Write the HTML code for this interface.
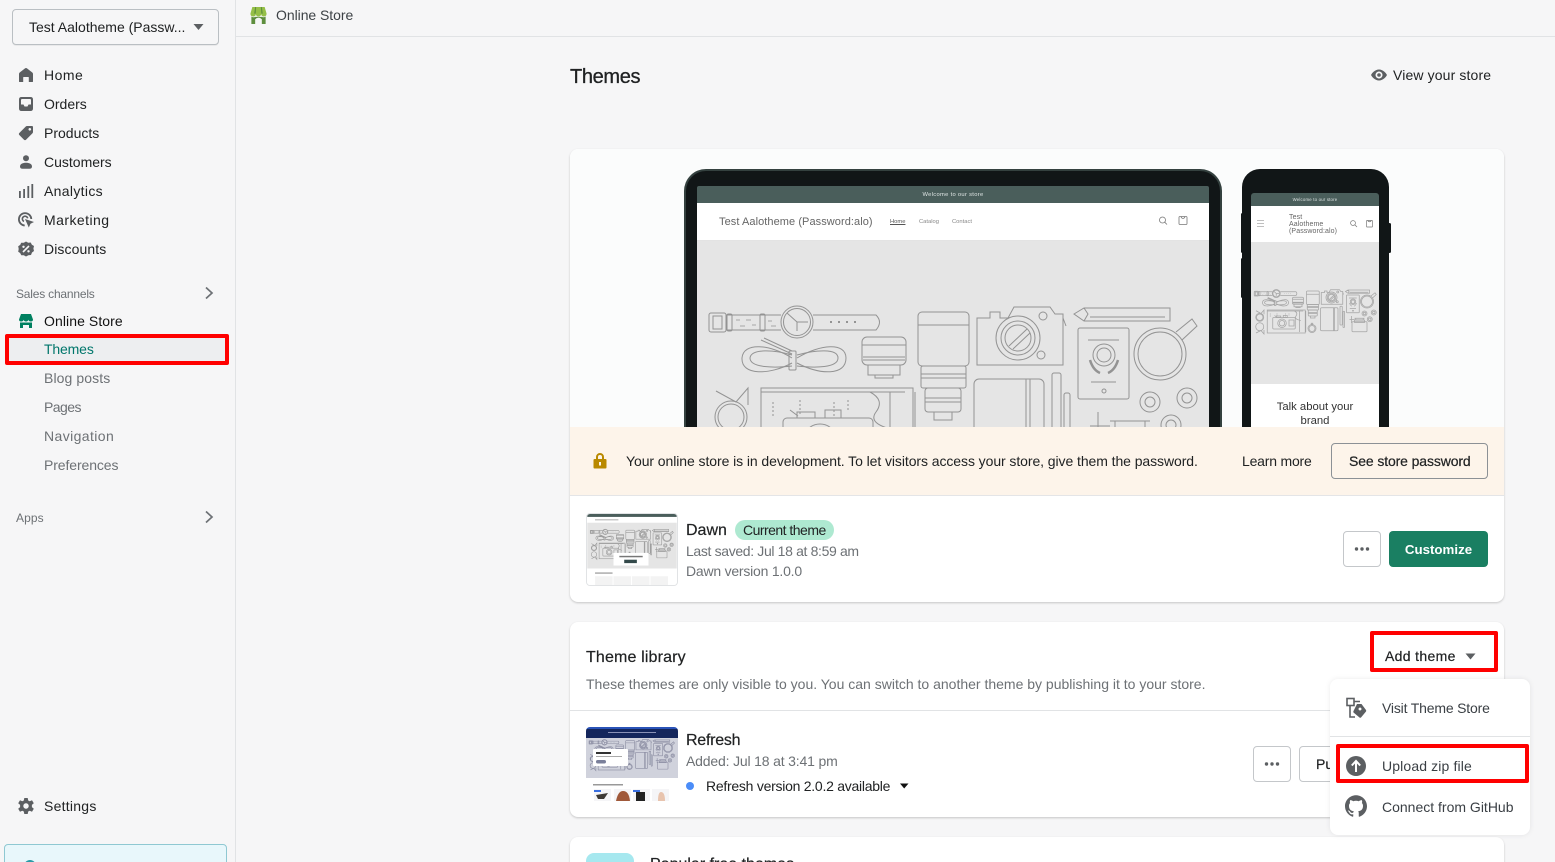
<!DOCTYPE html>
<html><head><meta charset="utf-8"><style>
html,body{margin:0;padding:0;width:1555px;height:862px;overflow:hidden;background:#f6f6f7;font-family:"Liberation Sans",sans-serif;color:#202223;font-size:14px}
#root{position:relative;width:1555px;height:862px;overflow:hidden;background:#f6f6f7}
.a{position:absolute}
.t{position:absolute;line-height:20px;height:20px;white-space:nowrap}
.g{color:#6d7175}
.sb{position:absolute;left:0;top:0;width:235px;height:862px;border-right:1px solid #e1e3e5;background:#f6f6f7}
.card{position:absolute;left:570px;width:934px;background:#fff;border-radius:8px;box-shadow:0 1px 2px rgba(0,0,0,.2)}
.btn{position:absolute;box-sizing:border-box;border:1px solid #c4c7ca;border-radius:4px;background:#fff}
.red{position:absolute;box-sizing:border-box;border:4px solid #f00;border-radius:2px}
svg{position:absolute;overflow:hidden}
.i{fill:#5c5f62}
</style></head><body><div id="root">
<svg width="0" height="0" style="position:absolute"><defs>
<g id="lay" fill="none">
<!-- watch -->
<rect x="709" y="313" width="17" height="19" rx="2"/><rect x="713" y="316" width="9" height="13"/>
<path d="M726 315H781M726 330H781"/><rect x="727" y="314" width="5" height="17" rx="1.5"/><rect x="760" y="314" width="5" height="17" rx="1.5"/>
<path d="M736 320h4M746 320h5M740 326h5M752 325h4M768 321h4M771 326h5" stroke-width=".7"/>
<circle cx="797" cy="322" r="16"/><circle cx="797" cy="322" r="13.500"/><path d="M797 322L787 313M797 322V331M797 322H808"/>
<path d="M813 315H876Q883 322 876 330H813"/><path d="M830 322h2M838 322h2M846 322h2M854 322h2" stroke-width="2"/>
<!-- cord -->
<path d="M792 358C770 344 743 342 742 358C741 376 770 375 792 363M797 358C820 344 846 342 846 358C846 376 820 375 797 363"/>
<path d="M792 355C775 350 751 348 750 358C750 368 775 368 792 366M797 355C815 350 838 348 838 358C838 368 815 368 797 366"/>
<rect x="789" y="351" width="7" height="19" rx="1"/><path d="M761 340L792 354M764 338L792 351"/>
<!-- small lens -->
<rect x="862" y="337" width="44" height="28" rx="5"/><path d="M862 345H906M863 357H905M863 360H905"/><path d="M868 365V375H900V365M875 375V378H893V375"/>
<!-- big lens -->
<rect x="918" y="312" width="51" height="54" rx="4"/><path d="M918 325H969"/><rect x="921" y="366" width="45" height="22" rx="2"/><path d="M921 374H966M921 378H966"/><rect x="925" y="388" width="36" height="24" rx="3"/><path d="M925 398H961M925 402H961"/><path d="M934 412V420H952V412"/>
<!-- camera -->
<path d="M977 365V318H990V312H1000V318H1008L1014 307H1050L1055 314H1063V365Z"/><circle cx="1018" cy="338" r="22"/><circle cx="1018" cy="338" r="17"/><circle cx="1018" cy="338" r="13"/><path d="M1009 346L1027 329M1013 349L1030 333"/><circle cx="1043" cy="316" r="4"/><circle cx="1041" cy="355" r="4"/><path d="M1063 318L1066 326"/>
<!-- pencil -->
<path d="M1074 314L1084 308H1170V321H1084ZM1084 308L1088 314L1084 321"/><path d="M1090 317H1165"/>
<!-- passport -->
<rect x="1078" y="328" width="51" height="71" rx="2"/><path d="M1088 340H1119M1091 382H1116"/><circle cx="1104" cy="355" r="11"/><circle cx="1104" cy="355" r="7"/><path d="M1090 360Q1093 370 1100 373M1118 360Q1115 370 1108 373" stroke-width="2.500"/><circle cx="1104" cy="391" r="2"/>
<!-- mug -->
<circle cx="1160" cy="354" r="26"/><circle cx="1160" cy="354" r="22"/><path d="M1176 332L1192 319L1197 326L1182 340"/>
<!-- notebook / pens -->
<rect x="974" y="379" width="70" height="92" rx="5"/><path d="M1026 379V471M1030 379V471"/><rect x="1052" y="373" width="9" height="75" rx="2"/><rect x="1064" y="393" width="6" height="65" rx="2"/>
<!-- tapes -->
<circle cx="1150" cy="402" r="10"/><circle cx="1150" cy="402" r="5"/><circle cx="1187" cy="398" r="10"/><circle cx="1187" cy="398" r="5"/><circle cx="1171" cy="425" r="10"/><circle cx="1171" cy="425" r="5"/>
<!-- tripod -->
<path d="M1110 421H1150M1115 421V428H1145V421M1098 412V440M1090 426H1110"/><rect x="1100" y="435" width="60" height="40" rx="3"/><rect x="1110" y="428" width="40" height="10"/>
<!-- glasses -->
<path d="M716 391L736 402L748 388V405"/><circle cx="731" cy="417" r="16"/><circle cx="731" cy="417" r="13"/><circle cx="731" cy="455" r="16"/><path d="M716 480L736 470L748 484V468"/>
<!-- map -->
<rect x="761" y="388" width="152" height="92"/><path d="M915 392V476M761 392H905M870 392Q885 400 876 412T895 430M890 392V476"/>
<path d="M773 402V418M800 400V416M834 402V416M848 400V412" stroke-dasharray="2 2"/>
<!-- camera 2 -->
<rect x="783" y="418" width="90" height="46" rx="4"/><rect x="797" y="412" width="18" height="6"/><rect x="825" y="410" width="16" height="8"/><circle cx="820" cy="441" r="17"/><circle cx="820" cy="441" r="11"/><rect x="848" y="428" width="20" height="24"/><path d="M790 410L798 416"/>
<!-- compass -->
<circle cx="940" cy="462" r="16"/><circle cx="940" cy="462" r="12"/><rect x="937" y="441" width="6" height="5"/>
</g>
</defs></svg>

<!-- topbar -->
<div class="a" style="left:236px;top:0;width:1319px;height:36px;border-bottom:1px solid #e1e3e5;background:#f6f6f7"></div>
<svg style="left:249px;top:6px" width="19" height="19" viewBox="0 0 19 20"><path fill="#95bf47" d="M3 1H16L18 8Q18 11 15 11Q12.500 11 12.300 8.500Q12 11 9.500 11Q7 11 6.700 8.500Q6.500 11 4 11Q1 11 1 8Z"/><path fill="#5e8e3e" d="M6 1H7L6.500 8H5ZM12 1H13L14 8H12.500Z"/><path fill="#5e8e3e" d="M2 11Q4 12.500 6 11.500V19H2ZM13 11.500Q15 12.500 17 11V19H13ZM6 14Q9.500 10.500 13 14V11.500H6Z"/></svg>
<div class="t" style="left:276px;top:5px;color:#3d4246;letter-spacing:-.05px">Online Store</div>

<!-- sidebar -->
<div class="sb"></div>
<div class="btn" style="left:12px;top:9px;width:207px;height:36px;border-color:#babfc3;background:#f6f6f7;box-shadow:0 1px 0 rgba(0,0,0,.05)"></div>
<div class="t" style="left:29px;top:17px">Test Aalotheme (Passw...</div>
<svg style="left:193px;top:24px" width="11" height="6"><path d="M.5 0H10.500L5.500 6Z" fill="#5c5f62"/></svg>

<svg style="left:16px;top:65px" width="20" height="20" viewBox="0 0 20 20"><path class="i" d="M9 3.400Q10 2.600 11 3.400L16.300 7.500Q17 8 17 9V16.500Q17 17 16.500 17H12.800V12.500Q12.800 12 12.300 12H7.700Q7.200 12 7.200 12.500V17H3.500Q3 17 3 16.500V9Q3 8 3.700 7.500Z"/></svg>
<div class="t" style="left:44px;top:65px;letter-spacing:.5px">Home</div>
<svg style="left:16px;top:94px" width="20" height="20" viewBox="0 0 20 20"><path class="i" fill-rule="evenodd" d="M5.500 3H14.500Q17 3 17 5.500V14.500Q17 17 14.500 17H5.500Q3 17 3 14.500V5.500Q3 3 5.500 3ZM6 5Q5 5 5 6V10.500H7.500L8.500 12.500H11.500L12.500 10.500H15V6Q15 5 14 5Z"/></svg>
<div class="t" style="left:44px;top:94px">Orders</div>
<svg style="left:16px;top:123px" width="20" height="20" viewBox="0 0 20 20"><path class="i" fill-rule="evenodd" d="M11 3H16Q17 3 17 4V9Q17 9.700 16.500 10.200L10 16.700Q9 17.600 8 16.700L3.300 12Q2.400 11 3.300 10L9.800 3.500Q10.300 3 11 3ZM13.800 5A1.300 1.300 0 1 0 13.810 5Z"/></svg>
<div class="t" style="left:44px;top:123px">Products</div>
<svg style="left:16px;top:152px" width="20" height="20" viewBox="0 0 20 20"><circle class="i" cx="10" cy="6.200" r="3"/><path class="i" d="M4 14.500C4 12 7 10.800 10 10.800S16 12 16 14.500C16 16 15 16.800 13.500 16.800H6.500C5 16.800 4 16 4 14.500Z"/></svg>
<div class="t" style="left:44px;top:152px">Customers</div>
<svg style="left:16px;top:181px" width="20" height="20" viewBox="0 0 20 20"><rect class="i" x="3" y="10" width="1.800" height="7"/><rect class="i" x="7.200" y="8" width="1.800" height="9"/><rect class="i" x="11.400" y="5" width="1.800" height="12"/><rect class="i" x="15.400" y="3" width="1.800" height="14"/></svg>
<div class="t" style="left:44px;top:181px;letter-spacing:.33px">Analytics</div>
<svg style="left:16px;top:210px" width="20" height="20" viewBox="0 0 20 20"><path fill="none" stroke="#5c5f62" stroke-width="1.800" d="M8.700 15.500A6.200 6.200 0 1 1 15.300 9"/><path fill="none" stroke="#5c5f62" stroke-width="1.600" d="M8 11.400A2.700 2.700 0 1 1 11.700 8.300"/><path class="i" d="M9 9L18 12L14.500 13.800L12.800 17.500Z"/></svg>
<div class="t" style="left:44px;top:210px;letter-spacing:.45px">Marketing</div>
<svg style="left:16px;top:239px" width="20" height="20" viewBox="0 0 20 20"><path class="i" d="M10 2.500L12.200 3.700L14.700 3.500L15.900 5.700L18 7L17.400 9.500L18 12L16 13.500L15 16L12.400 16.200L10 17.500L7.800 16.300L5.300 16.200L4.100 14L2.200 12.800L2.700 10L2.200 7.300L4.200 5.900L5.200 3.700L7.800 3.700Z"/><path stroke="#f6f6f7" stroke-width="1.600" d="M7 13L13 7"/><circle cx="7.500" cy="7.800" r="1.200" fill="#f6f6f7"/><circle cx="12.500" cy="12.300" r="1.200" fill="#f6f6f7"/></svg>
<div class="t" style="left:44px;top:239px;letter-spacing:.1px">Discounts</div>

<div class="t g" style="left:16px;top:284px;font-size:12px;letter-spacing:-.2px">Sales channels</div>
<svg style="left:204px;top:286px" width="11" height="14"><path d="M2 1.500L8 7L2 12.500" fill="none" stroke="#6d7175" stroke-width="1.700"/></svg>
<svg style="left:16px;top:311px" width="20" height="20" viewBox="0 0 20 20"><path fill="#008060" d="M5 3H15L17 8.500Q17 10.500 14.800 10.500Q12.700 10.500 12.400 8.800Q12 10.500 10 10.500Q8 10.500 7.600 8.800Q7.300 10.500 5.200 10.500Q3 10.500 3 8.500Z"/><rect x="4" y="11.500" width="12" height="5.500" fill="#008060"/><rect x="7" y="14" width="6" height="3" fill="#f6f6f7"/></svg>
<div class="t" style="left:44px;top:311px;color:#111;letter-spacing:.08px">Online Store</div>
<div class="a" style="left:8px;top:337px;width:218px;height:25px;background:#edeef0"></div>
<div class="red" style="left:5px;top:334px;width:224px;height:31px"></div>
<div class="t" style="left:44px;top:339px;color:#00766b;letter-spacing:-.15px">Themes</div>
<div class="t g" style="left:44px;top:368px;letter-spacing:.1px">Blog posts</div>
<div class="t g" style="left:44px;top:397px;letter-spacing:-.55px">Pages</div>
<div class="t g" style="left:44px;top:426px;letter-spacing:.4px">Navigation</div>
<div class="t g" style="left:44px;top:455px;letter-spacing:-.1px">Preferences</div>
<div class="t g" style="left:16px;top:508px;font-size:12px;letter-spacing:.1px">Apps</div>
<svg style="left:204px;top:510px" width="11" height="14"><path d="M2 1.500L8 7L2 12.500" fill="none" stroke="#6d7175" stroke-width="1.700"/></svg>

<svg style="left:16px;top:796px" width="20" height="20" viewBox="0 0 20 20"><path class="i" fill-rule="evenodd" d="M8.300 2H11.700L12.200 4.500L13.700 5.300L16 4.300L17.800 7.300L15.900 8.900V11.100L17.800 12.700L16 15.700L13.700 14.700L12.200 15.500L11.700 18H8.300L7.800 15.500L6.300 14.700L4 15.700L2.200 12.700L4.100 11.100V8.900L2.200 7.300L4 4.300L6.300 5.300L7.800 4.500ZM10 7.300A2.700 2.700 0 1 0 10.010 7.300Z"/></svg>
<div class="t" style="left:44px;top:796px;letter-spacing:.25px">Settings</div>
<div class="a" style="left:4px;top:844px;width:221px;height:30px;background:#e8f7fb;border:1px solid #8fc8d2;border-radius:4px"></div>
<div class="a" style="left:24px;top:860px;width:12px;height:12px;border-radius:50%;background:#2a9aa6"></div>

<!-- heading -->
<div class="t" style="left:570px;top:65px;font-size:20px;line-height:24px;height:24px;color:#202223;-webkit-text-stroke:.3px #202223;letter-spacing:-.35px">Themes</div>
<svg style="left:1370px;top:66px" width="18" height="18" viewBox="0 0 18 18"><path fill="#5c5f62" fill-rule="evenodd" d="M9 3.500C13 3.500 16 7 17 9C16 11 13 14.500 9 14.500S2 11 1 9C2 7 5 3.500 9 3.500ZM9 5.500A3.500 3.500 0 1 0 9.010 5.500Z"/><circle cx="9" cy="9" r="1.800" fill="#5c5f62"/></svg>
<div class="t" style="left:1393px;top:65px;letter-spacing:.13px">View your store</div>

<!-- card 1 -->
<div class="card" style="top:149px;height:453px;overflow:hidden">
<div class="a" style="left:0;top:0;width:934px;height:278px;background:#fbfcfc"></div>
<!-- laptop -->
<div class="a" style="left:114px;top:20px;width:534px;height:262px;background:#111617;border:2px solid #34413f;border-bottom:0;border-radius:22px 22px 0 0"></div>
<div class="a" style="left:127px;top:37px;width:512px;height:17px;background:#4a5e5b;border-radius:2px 2px 0 0;color:#dfe5e4;font-size:5.800px;line-height:19px;text-align:center;letter-spacing:.3px">Welcome to our store</div>
<div class="a" style="left:127px;top:54px;width:512px;height:37px;background:#fff;border-bottom:1px solid #e3e3e3"></div>
<div class="t" style="left:149px;top:63px;font-size:11px;color:#666;letter-spacing:.07px">Test Aalotheme (Password:alo)</div>
<div class="t" style="left:320px;top:63px;font-size:5.800px;color:#555;text-decoration:underline">Home</div>
<div class="t" style="left:349px;top:63px;font-size:5.800px;color:#888">Catalog</div>
<div class="t" style="left:382px;top:63px;font-size:5.800px;color:#888">Contact</div>
<svg style="left:588px;top:66px" width="32" height="12" viewBox="0 0 32 12"><circle cx="4.500" cy="5" r="3" fill="none" stroke="#777" stroke-width=".8"/><path d="M6.700 7.200L9 9.500" stroke="#777" stroke-width=".8"/><path d="M21 2.500Q21 1.500 22 1.500H28Q29 1.500 29 2.500V8.500Q29 9.500 28 9.500H22Q21 9.500 21 8.500ZM23 2Q25 5 27 2" fill="none" stroke="#777" stroke-width=".8"/></svg>
<div class="a" style="left:127px;top:92px;width:512px;height:186px;background:#e5e5e5"></div>
<svg style="left:127px;top:92px" width="512" height="186" viewBox="697 241 512 186"><use href="#lay" stroke="#939393" stroke-width="1"/></svg>
<!-- phone -->
<div class="a" style="left:671px;top:64px;width:3px;height:40px;background:#111617;border-radius:2px"></div>
<div class="a" style="left:671px;top:109px;width:3px;height:40px;background:#111617;border-radius:2px"></div>
<div class="a" style="left:818px;top:74px;width:3px;height:30px;background:#111617;border-radius:2px"></div>
<div class="a" style="left:672px;top:20px;width:147px;height:260px;background:#111617;border-radius:18px 18px 0 0"></div>
<div class="a" style="left:681px;top:44px;width:128px;height:13px;background:#4a5e5b;border-radius:3px 3px 0 0;color:#dfe5e4;font-size:4.300px;line-height:13px;text-align:center;letter-spacing:.2px">Welcome to our store</div>
<div class="a" style="left:681px;top:57px;width:128px;height:36px;background:#fff"></div>
<div class="a" style="left:719px;top:64.500px;font-size:7px;line-height:7.300px;color:#666;letter-spacing:.1px">Test<br>Aalotheme<br>(Password:alo)</div>
<svg style="left:686px;top:70px" width="10" height="9"><path d="M1 1.500H8M1 4.500H8M1 7.500H8" stroke="#aaa" stroke-width=".8"/></svg>
<svg style="left:779px;top:70px" width="26" height="10" viewBox="0 0 26 10"><circle cx="4" cy="4" r="2.400" fill="none" stroke="#777" stroke-width=".7"/><path d="M5.800 5.800L8 8" stroke="#777" stroke-width=".7"/><path d="M17.500 2Q17.500 1.500 18 1.500H23Q23.500 1.500 23.500 2V7.500Q23.500 8 23 8H18Q17.500 8 17.500 7.500ZM18.500 1.500Q20.500 4 22.500 1.500" fill="none" stroke="#777" stroke-width=".7"/></svg>
<div class="a" style="left:681px;top:93px;width:128px;height:142px;background:#e5e5e5"></div>
<svg style="left:681px;top:93px" width="128" height="142" viewBox="0 0 128 142"><g transform="translate(-174 -29) scale(.25)"><use href="#lay" stroke="#a5a5a5" stroke-width="3"/></g></svg>
<div class="a" style="left:681px;top:235px;width:128px;height:43px;background:#fff"></div>
<div class="a" style="left:681px;top:251px;width:128px;text-align:center;font-size:11.300px;line-height:14px;color:#333">Talk about your<br>brand</div>
<!-- banner -->
<div class="a" style="left:0;top:278px;width:934px;height:68px;background:#fdf4ea;border-bottom:1px solid #e4e5e7"></div>
<svg style="left:23px;top:303px" width="14" height="18" viewBox="0 0 14 18"><path fill="#b98900" fill-rule="evenodd" d="M3 7V5A4 4 0 0 1 11 5V7H12.500Q13.500 7 13.500 8V15.500Q13.500 16.500 12.500 16.500H1.500Q.5 16.500 .5 15.500V8Q.5 7 1.500 7ZM5 7H9V5A2 2 0 0 0 5 5ZM6 10V13.500H8V10Z"/></svg>
<div class="t" style="left:56px;top:302px;letter-spacing:-.075px">Your online store is in development. To let visitors access your store, give them the password.</div>
<div class="t" style="left:672px;top:302px;letter-spacing:-.2px">Learn more</div>
<div class="btn" style="left:761px;top:294px;width:157px;height:36px;background:#fdf4ea;border-color:#8c9196"></div>
<div class="t" style="left:779px;top:302px;-webkit-text-stroke:.2px #202223;letter-spacing:-.12px">See store password</div>
<!-- Dawn -->
<svg style="left:16px;top:364px;border:1px solid #e1e3e5;border-radius:4px;box-sizing:border-box" width="92" height="73" viewBox="0 0 92 73">
<rect width="92" height="73" fill="#fff"/><rect width="92" height="3" fill="#4a5e5b"/><rect y="9" width="92" height="47" fill="#e5e5e5"/>
<rect x="8" y="5.500" width="24" height="1" fill="#aaa"/><g transform="translate(-121 -38) scale(.175)"><use href="#lay" stroke="#9a9a9a" stroke-width="3.500"/></g>
<rect x="27" y="40" width="36" height="13" fill="#fff"/><rect x="33" y="43" width="24" height="1.500" fill="#777"/><rect x="38" y="47" width="13" height="3.500" fill="#33494a"/>
<rect x="8" y="60" width="18" height="1.500" fill="#aaa"/><rect x="8" y="64" width="18" height="9" fill="#f3f3f3"/><rect x="27" y="64" width="18" height="9" fill="#f3f3f3"/><rect x="46" y="64" width="18" height="9" fill="#f3f3f3"/><rect x="65" y="64" width="18" height="9" fill="#f3f3f3"/>
</svg>
<div class="t" style="left:116px;top:372px;font-size:16px;-webkit-text-stroke:.2px #202223">Dawn</div>
<div class="a" style="left:165px;top:371px;width:99px;height:20px;border-radius:10px;background:#aee9d1"></div>
<div class="t" style="left:173px;top:371px;letter-spacing:-.52px">Current theme</div>
<div class="t g" style="left:116px;top:392px;letter-spacing:-.35px">Last saved: Jul 18 at 8:59 am</div>
<div class="t g" style="left:116px;top:412px;letter-spacing:-.22px">Dawn version 1.0.0</div>
<div class="btn" style="left:773px;top:382px;width:38px;height:36px"></div>
<svg style="left:784px;top:397px" width="16" height="6"><circle cx="2.500" cy="3" r="1.700" fill="#5c5f62"/><circle cx="8" cy="3" r="1.700" fill="#5c5f62"/><circle cx="13.500" cy="3" r="1.700" fill="#5c5f62"/></svg>
<div class="a" style="left:819px;top:382px;width:99px;height:36px;background:#1a7f62;border-radius:4px;color:#fff;text-align:center;line-height:37px;font-weight:700;font-size:13.300px">Customize</div>
</div>

<!-- card 2 -->
<div class="card" style="top:622px;height:195px">
<div class="t" style="left:16px;top:25px;font-size:16px;-webkit-text-stroke:.2px #202223;letter-spacing:.15px;line-height:22px">Theme library</div>
<div class="t g" style="left:16px;top:52px">These themes are only visible to you. You can switch to another theme by publishing it to your store.</div>
<div class="a" style="left:0;top:88px;width:934px;height:1px;background:#e1e3e5"></div>
<svg style="left:16px;top:105px;border-radius:4px" width="92" height="74" viewBox="0 0 92 74">
<rect width="92" height="74" fill="#fff"/><rect y="11" width="92" height="40" fill="#d0d2dc"/><rect width="92" height="2" fill="#2a53b8"/><rect y="2" width="92" height="9" fill="#14265c"/>
<rect x="22" y="5" width="48" height="1" fill="#8a92b8"/>
<g transform="translate(-121 -41) scale(.175)"><use href="#lay" stroke="#8b8da2" stroke-width="3.500"/></g>
<rect x="7" y="22" width="35" height="17" rx="1" fill="#fff"/><rect x="10" y="25" width="15" height="2" fill="#333"/><rect x="10" y="29" width="26" height="1" fill="#aaa"/><rect x="10" y="33" width="10" height="3.500" rx="1.700" fill="#7a7f9a"/>
<rect x="7" y="57" width="30" height="1.500" fill="#999"/>
<rect x="8" y="62" width="17" height="12" fill="#f5f5f7"/><path d="M10 68L22 66L18 72H12Z" fill="#3d3a35"/><rect x="8" y="63" width="7" height="2" fill="#3a6fe0"/>
<rect x="28" y="62" width="17" height="12" fill="#f5f5f7"/><path d="M30 74Q32 64 37 64Q43 64 44 74Z" fill="#a0593a"/>
<rect x="47" y="62" width="17" height="12" fill="#f5f5f7"/><rect x="50" y="65" width="9" height="9" fill="#222"/><rect x="47" y="63" width="7" height="2" fill="#3a6fe0"/>
<rect x="66" y="62" width="17" height="12" fill="#f5f5f7"/><path d="M72 74Q72 65 75 65Q79 65 79 74Z" fill="#e8c4ae"/>
</svg>
<div class="t" style="left:116px;top:109px;font-size:16px;-webkit-text-stroke:.2px #202223;letter-spacing:-.25px">Refresh</div>
<div class="t g" style="left:116px;top:129px;letter-spacing:-.17px">Added: Jul 18 at 3:41 pm</div>
<div class="a" style="left:116px;top:160px;width:8px;height:8px;border-radius:50%;background:#4b8df8"></div>
<div class="t" style="left:136px;top:154px;letter-spacing:-.26px">Refresh version 2.0.2 available</div>
<svg style="left:329px;top:161px" width="11" height="6"><path d="M1 0.500H9.500L5.200 5.500Z" fill="#111"/></svg>
<div class="btn" style="left:683px;top:124px;width:38px;height:36px"></div>
<svg style="left:694px;top:139px" width="16" height="6"><circle cx="2.500" cy="3" r="1.700" fill="#5c5f62"/><circle cx="8" cy="3" r="1.700" fill="#5c5f62"/><circle cx="13.500" cy="3" r="1.700" fill="#5c5f62"/></svg>
<div class="btn" style="left:729px;top:124px;width:90px;height:36px"></div>
<div class="t" style="left:746px;top:132px;-webkit-text-stroke:.2px #202223">Publish</div>
</div>

<!-- card 3 -->
<div class="card" style="top:837px;height:60px"></div>
<div class="a" style="left:586px;top:853px;width:48px;height:40px;border-radius:8px;background:#a6e8ef"></div>
<div class="t" style="left:650px;top:855px;font-size:16px;-webkit-text-stroke:.2px #202223">Popular free themes</div>

<!-- add theme -->
<div class="red" style="left:1370px;top:631px;width:128px;height:41px"></div>
<div class="t" style="left:1385px;top:646px;-webkit-text-stroke:.2px #202223;letter-spacing:.33px">Add theme</div>
<svg style="left:1465px;top:653px" width="11" height="7"><path d="M.5 .5H10.500L5.500 6.500Z" fill="#5c5f62"/></svg>

<!-- dropdown -->
<div class="a" style="left:1330px;top:679px;width:200px;height:156px;background:#fff;border-radius:8px;box-shadow:0 0 6px rgba(0,0,0,.08)"></div>
<svg style="left:1345px;top:697px" width="22" height="23" viewBox="0 0 22 23"><rect x="2" y="1.500" width="7" height="7" fill="none" stroke="#5c5f62" stroke-width="1.600"/><path d="M9 4.500H15M5 8.500V20H10" fill="none" stroke="#5c5f62" stroke-width="1.600"/><path class="i" fill-rule="evenodd" d="M12 7H16.500L21 13Q21.500 14 21 14.500L16 20.500Q15.200 21 14.500 20.500L8.500 15.500Q8 15 8.500 14Z M15 10.500A1.500 1.500 0 1 0 15.010 10.500Z"/></svg>
<div class="t" style="left:1382px;top:698px;color:#3a3f44;letter-spacing:-.18px">Visit Theme Store</div>
<div class="a" style="left:1330px;top:736px;width:200px;height:1px;background:#e1e3e5"></div>
<svg style="left:1345px;top:755px" width="22" height="22" viewBox="0 0 22 22"><circle class="i" cx="11" cy="11" r="10"/><path d="M11 17V6.500M6.800 10.500L11 6L15.200 10.500" fill="none" stroke="#fff" stroke-width="2"/></svg>
<div class="t" style="left:1382px;top:756px;color:#3a3f44;letter-spacing:.13px">Upload zip file</div>
<div class="red" style="left:1336px;top:744px;width:193px;height:39px"></div>
<svg style="left:1345px;top:795px" width="22" height="22" viewBox="0 0 16 16"><path fill="#5c5f62" d="M8 0.200C3.600 0.200 0 3.800 0 8.200C0 11.700 2.300 14.700 5.500 15.800C5.900 15.900 6 15.600 6 15.400V14C3.800 14.500 3.300 13 3.300 13C2.900 12.100 2.400 11.800 2.400 11.800C1.700 11.300 2.500 11.300 2.500 11.300C3.300 11.400 3.700 12.100 3.700 12.100C4.400 13.400 5.600 13 6 12.800C6.100 12.300 6.300 12 6.500 11.800C4.700 11.600 2.900 10.900 2.900 7.900C2.900 7 3.200 6.300 3.700 5.800C3.600 5.600 3.300 4.800 3.800 3.700C3.800 3.700 4.500 3.500 6 4.500C6.600 4.300 7.300 4.200 8 4.200C8.700 4.200 9.400 4.300 10 4.500C11.500 3.500 12.200 3.700 12.200 3.700C12.700 4.800 12.400 5.600 12.300 5.800C12.800 6.300 13.100 7 13.100 7.900C13.100 10.900 11.300 11.600 9.500 11.800C9.800 12 10 12.500 10 13.200V15.400C10 15.600 10.100 15.900 10.500 15.800C13.700 14.700 16 11.700 16 8.200C16 3.800 12.400 0.200 8 0.200Z"/></svg>
<div class="t" style="left:1382px;top:797px;color:#3a3f44">Connect from GitHub</div>
</div></body></html>
